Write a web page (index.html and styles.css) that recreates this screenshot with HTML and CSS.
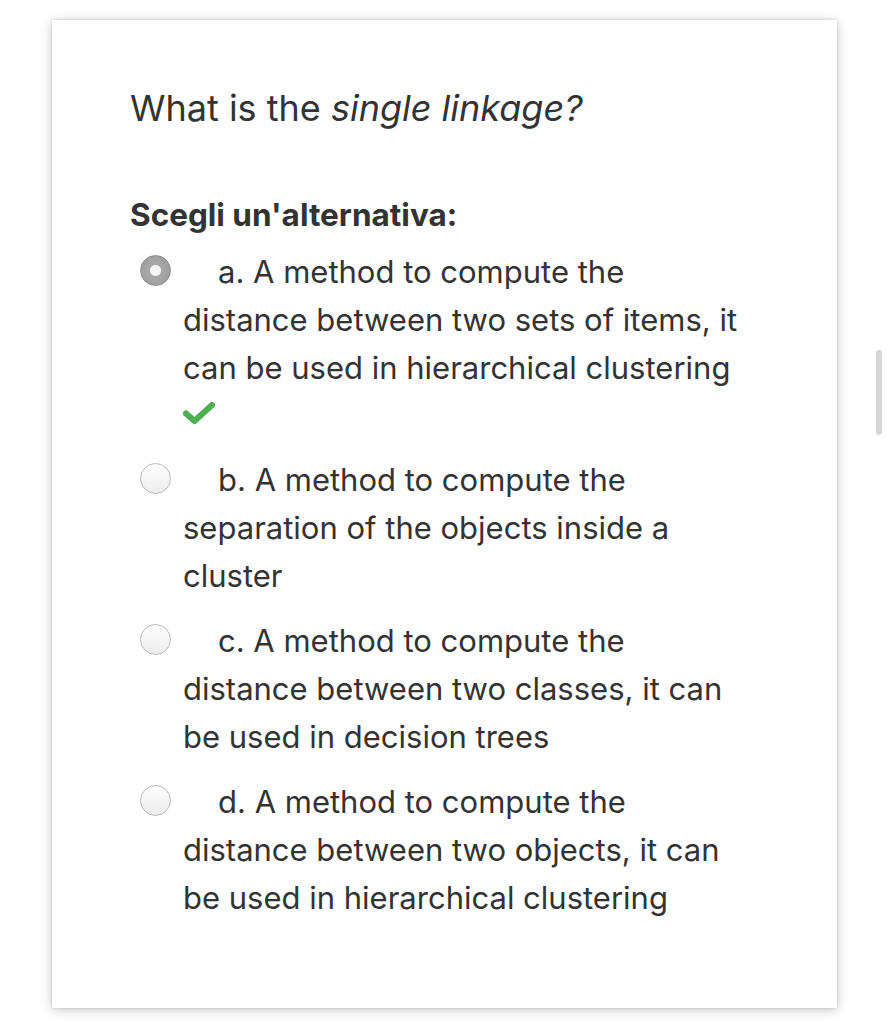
FILE: index.html
```html
<!DOCTYPE html>
<html lang="en">
<head>
<meta charset="utf-8">
<title>Quiz</title>
<link rel="stylesheet" href="styles.css">
</head>
<body>
<div class="page">
  <div class="card">
    <h1 class="question">What is the <em>single linkage?</em></h1>
    <h2 class="prompt">Scegli un'alternativa:</h2>
    <div class="answers">
      <div class="option">
        <div class="radio-col"><span class="radio checked"></span></div>
        <div class="text">a. A method to compute the distance between two sets of items, it can be used in hierarchical clustering
          <div class="check-row"><svg class="check" width="32" height="22" viewBox="0 0 32 22"><path d="M3 11.5 L11.5 19 L29 3" fill="none" stroke="#4cb050" stroke-width="6" stroke-linecap="round" stroke-linejoin="round"/></svg></div>
        </div>
      </div>
      <div class="option">
        <div class="radio-col"><span class="radio"></span></div>
        <div class="text">b. A method to compute the separation of the objects inside a cluster</div>
      </div>
      <div class="option">
        <div class="radio-col"><span class="radio"></span></div>
        <div class="text">c. A method to compute the distance between two classes, it can be used in decision trees</div>
      </div>
      <div class="option">
        <div class="radio-col"><span class="radio"></span></div>
        <div class="text">d. A method to compute the distance between two objects, it can be used in hierarchical clustering</div>
      </div>
    </div>
  </div>
  <div class="scroll-indicator"></div>
</div>
</body>
</html>
```
FILE: styles.css
```css
html, body {
  margin: 0;
  padding: 0;
  background: #ffffff;
}
body {
  font-family: Inter, "Noto Sans", "Liberation Sans", sans-serif;
  color: #333333;
}
.page {
  position: relative;
  padding: 20px 52px 16px 52px;
  height: 1024px;
  box-sizing: border-box;
}
.card {
  background: #ffffff;
  height: 988px;
  box-sizing: border-box;
  padding: 64px 78px 0 78px;
  box-shadow: 0 2px 12px rgba(0, 0, 0, 0.2), 0 0 3px rgba(0, 0, 0, 0.18);
}
.question {
  margin: 0;
  font-size: 36px;
  font-weight: 400;
  line-height: 48px;
}
.question em {
  font-style: italic;
}
.prompt {
  margin: 59px 0 0 0;
  font-size: 31.5px;
  font-weight: 700;
  line-height: 48px;
}
.answers {
  margin-top: 9px;
}
.option {
  display: flex;
  margin-bottom: 17px;
}
.radio-col {
  width: 53px;
  flex: none;
  display: flex;
  align-items: flex-start;
  padding-top: 7px;
  padding-left: 10px;
  box-sizing: border-box;
}
.radio {
  width: 31px;
  height: 31px;
  border-radius: 50%;
  box-sizing: border-box;
  border: 1.5px solid #b9b9b9;
  background: linear-gradient(#ffffff, #ececec);
  display: block;
}
.radio.checked {
  border: 1.5px solid #8c8c8c;
  background: radial-gradient(circle at 50% 50%, #f4f4f4 0, #f4f4f4 5px, #a8a8a8 6px, #9a9a9a 100%);
}
.text {
  font-size: 31px;
  line-height: 48px;
  text-indent: 35px;
  padding-right: 16px;
}
.check-row {
  text-indent: 0;
  height: 47px;
  padding-top: 10px;
  box-sizing: border-box;
}
.check {
  display: block;
}
.scroll-indicator {
  position: absolute;
  left: 876px;
  top: 350px;
  width: 6px;
  height: 85px;
  border-radius: 3px;
  background: #d6d6d6;
}
```
